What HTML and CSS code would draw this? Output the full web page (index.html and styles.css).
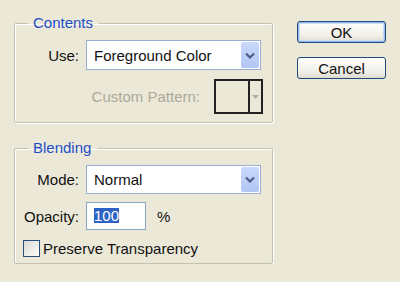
FILE: index.html
```html
<!DOCTYPE html>
<html>
<head>
    <meta charset="UTF-8">
    <title>Fill</title>
    <link rel="stylesheet" href="styles.css">
</head>
<body>
    <div class="dialog">
        <div class="panels">
            <fieldset class="group group-contents">
                <legend>Contents</legend>
                <div class="row">
                    <span class="label">Use:</span>
                    <div class="combo">
                        <span class="combo-text">Foreground Color</span>
                        <span class="combo-btn">
                            <svg width="10" height="7" viewBox="0 0 10 7"><path d="M1 1.5 L5 5.5 L9 1.5" fill="none" stroke="#4b5e86" stroke-width="2.2"/></svg>
                        </span>
                    </div>
                </div>
                <div class="pattern-row">
                    <span class="label disabled">Custom Pattern:</span>
                    <div class="pattern">
                        <span class="pattern-swatch"></span>
                        <span class="pattern-arrow">
                            <svg width="7" height="4" viewBox="0 0 7 4"><path d="M0 0 H7 L3.5 4 Z" fill="#b3b0a3"/></svg>
                        </span>
                    </div>
                </div>
            </fieldset>

            <fieldset class="group group-blending">
                <legend>Blending</legend>
                <div class="row">
                    <span class="label">Mode:</span>
                    <div class="combo combo-mode">
                        <span class="combo-text">Normal</span>
                        <span class="combo-btn">
                            <svg width="10" height="7" viewBox="0 0 10 7"><path d="M1 1.5 L5 5.5 L9 1.5" fill="none" stroke="#4b5e86" stroke-width="2.2"/></svg>
                        </span>
                    </div>
                </div>
                <div class="row row-opacity">
                    <span class="label">Opacity:</span>
                    <div class="field"><span class="selected">100</span></div>
                    <span class="unit">%</span>
                </div>
                <div class="check-row">
                    <span class="checkbox"></span>
                    <span>Preserve Transparency</span>
                </div>
            </fieldset>
        </div>

        <div class="buttons">
            <button class="btn btn-default">OK</button>
            <button class="btn">Cancel</button>
        </div>
    </div>
</body>
</html>
```

FILE: styles.css
```css
body {
    margin: 0;
    background-color: #ebe8d8;
    font-family: "Liberation Sans", Arial, sans-serif;
    font-size: 15px;
    color: #111;
}

.dialog {
    display: flex;
    padding-left: 14px;
}

.panels {
    width: 259px;
}

.group {
    margin: 0;
    padding: 0 8px 0 6px;
    border: 1px solid #c4c1b1;
    box-shadow: inset 1px 1px 0 #fff, 1px 1px 0 #fff;
    border-radius: 2px;
}

.group legend {
    margin-left: 7px;
    padding: 0 6px 0 5px;
    line-height: 16px;
    color: #1f4ec4;
}

.group-contents {
    margin-top: 15px;
    padding-bottom: 8px;
}

.group-blending {
    margin-top: 17px;
    padding-bottom: 6px;
}

.row {
    display: flex;
    align-items: center;
    margin-top: 9px;
}

.label {
    width: 58px;
    margin-right: 7px;
    text-align: right;
}

.disabled {
    color: #aca899;
}

.combo {
    display: flex;
    align-items: center;
    width: 175px;
    height: 30px;
    box-sizing: border-box;
    border: 1px solid #98aed4;
    background: #fff;
    padding: 1px;
}

.combo-mode {
    height: 29px;
}

.combo-text {
    flex: 1;
    padding-left: 6px;
}

.combo-btn {
    display: flex;
    align-items: center;
    justify-content: center;
    width: 18px;
    align-self: stretch;
    background: linear-gradient(#c9d8fc, #b2c6f5);
    border-radius: 2px;
}

.pattern-row {
    display: flex;
    justify-content: flex-end;
    align-items: center;
    margin-top: 9px;
    padding-right: 1px;
}

.pattern-row .label {
    width: auto;
    margin-right: 14px;
}

.pattern {
    display: flex;
    width: 49px;
    height: 35px;
    box-sizing: border-box;
    border: 2px solid #222;
}

.pattern-swatch {
    width: 32px;
    border-right: 2px solid #222;
}

.pattern-arrow {
    flex: 1;
    display: flex;
    align-items: center;
    justify-content: center;
}

.row-opacity {
    margin-top: 8px;
}

.field {
    width: 60px;
    height: 28px;
    box-sizing: border-box;
    border: 1px solid #8aa3c8;
    background: #fff;
    padding: 4px 0 0 7px;
}

.selected {
    background: #2d62c4;
    color: #fff;
    line-height: 15px;
    display: inline-block;
}

.unit {
    margin-left: 11px;
}

.check-row {
    display: flex;
    align-items: center;
    margin-top: 10px;
    padding-left: 2px;
}

.checkbox {
    width: 17px;
    height: 17px;
    box-sizing: border-box;
    border: 1px solid #2a4f7e;
    background: linear-gradient(135deg, #dcdcd5, #fbfbf9);
    margin-right: 3px;
}

.buttons {
    display: flex;
    flex-direction: column;
    gap: 14px;
    margin-left: 24px;
    padding-top: 21px;
}

.btn {
    width: 89px;
    height: 22px;
    padding: 0;
    font-family: inherit;
    font-size: 15px;
    color: #111;
    border: 1px solid #1d4a7a;
    border-radius: 3px;
    background: linear-gradient(#fefefd, #f0efe8 70%, #dedbcf);
}

.btn-default {
    box-shadow: inset 0 0 0 1px #9ab9e8, inset 0 0 0 2px #c8daf6;
}
```
